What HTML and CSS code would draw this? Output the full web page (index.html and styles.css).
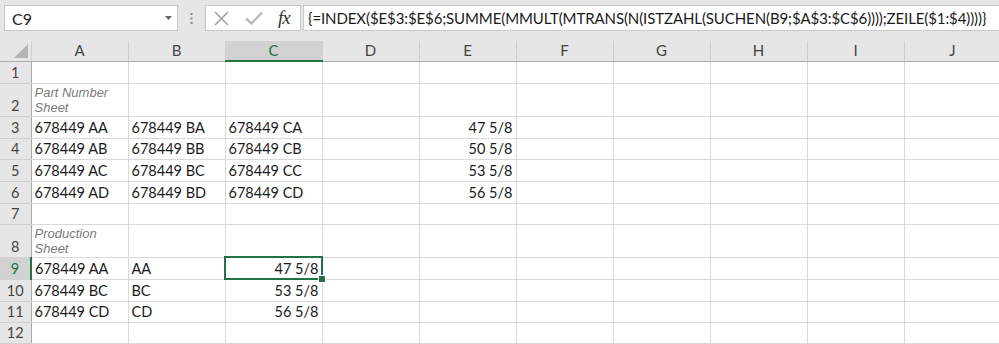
FILE: index.html
```html
<!DOCTYPE html>
<html lang="de">
<head>
    <meta charset="UTF-8">
    <title>Part Number Lookup</title>
    <link rel="stylesheet" href="styles.css">
</head>
<body>
    <div class="formula-bar">
        <div class="name-box">
            <span>C9</span>
            <svg class="dropdown" width="7" height="4" viewBox="0 0 7 4"><path d="M0 0h7L3.5 4z" fill="#666"/></svg>
        </div>
        <div class="grip">
            <svg width="3" height="11" viewBox="0 0 3 11"><rect x="0.5" y="0" width="2" height="2" fill="#888"/><rect x="0.5" y="4.5" width="2" height="2" fill="#888"/><rect x="0.5" y="9" width="2" height="2" fill="#888"/></svg>
        </div>
        <div class="fx-buttons">
            <svg class="btn-cancel" width="15" height="15" viewBox="0 0 15 15"><path d="M1 1l13 13M14 1L1 14" stroke="#a3a3a3" stroke-width="1.6" fill="none"/></svg>
            <svg class="btn-enter" width="18" height="14" viewBox="0 0 18 14"><path d="M1 7.5l5.5 5L17 1.5" stroke="#b9b9b9" stroke-width="2.4" fill="none"/></svg>
            <span class="fx">fx</span>
        </div>
        <div class="formula-input">{=INDEX($E$3:$E$6;SUMME(MMULT(MTRANS(N(ISTZAHL(SUCHEN(B9;$A$3:$C$6))));ZEILE($1:$4))))}</div>
    </div>

    <table class="sheet">
        <colgroup>
            <col class="col-rh">
            <col><col><col><col><col><col><col><col><col><col>
        </colgroup>
        <tr class="hdr">
            <th class="corner"><span class="tri"></span></th>
            <th>A</th><th>B</th><th class="sel">C</th><th>D</th><th>E</th><th>F</th><th>G</th><th>H</th><th>I</th><th>J</th>
        </tr>
        <tr class="h22">
            <th>1</th><td></td><td></td><td></td><td></td><td></td><td></td><td></td><td></td><td></td><td></td>
        </tr>
        <tr class="h33">
            <th>2</th><td class="note">Part Number Sheet</td><td></td><td></td><td></td><td></td><td></td><td></td><td></td><td></td><td></td>
        </tr>
        <tr class="h22">
            <th>3</th><td>678449 AA</td><td>678449 BA</td><td>678449 CA</td><td></td><td class="num">47 5/8</td><td></td><td></td><td></td><td></td><td></td>
        </tr>
        <tr class="h21">
            <th>4</th><td>678449 AB</td><td>678449 BB</td><td>678449 CB</td><td></td><td class="num">50 5/8</td><td></td><td></td><td></td><td></td><td></td>
        </tr>
        <tr class="h22">
            <th>5</th><td>678449 AC</td><td>678449 BC</td><td>678449 CC</td><td></td><td class="num">53 5/8</td><td></td><td></td><td></td><td></td><td></td>
        </tr>
        <tr class="h22">
            <th>6</th><td>678449 AD</td><td>678449 BD</td><td>678449 CD</td><td></td><td class="num">56 5/8</td><td></td><td></td><td></td><td></td><td></td>
        </tr>
        <tr class="h21">
            <th>7</th><td></td><td></td><td></td><td></td><td></td><td></td><td></td><td></td><td></td><td></td>
        </tr>
        <tr class="h33">
            <th>8</th><td class="note">Production Sheet</td><td></td><td></td><td></td><td></td><td></td><td></td><td></td><td></td><td></td>
        </tr>
        <tr class="h22">
            <th class="sel">9</th><td>678449 AA</td><td>AA</td><td class="num active">47 5/8</td><td></td><td></td><td></td><td></td><td></td><td></td><td></td>
        </tr>
        <tr class="h22">
            <th>10</th><td>678449 BC</td><td>BC</td><td class="num">53 5/8</td><td></td><td></td><td></td><td></td><td></td><td></td><td></td>
        </tr>
        <tr class="h21">
            <th>11</th><td>678449 CD</td><td>CD</td><td class="num">56 5/8</td><td></td><td></td><td></td><td></td><td></td><td></td><td></td>
        </tr>
        <tr class="h21">
            <th>12</th><td></td><td></td><td></td><td></td><td></td><td></td><td></td><td></td><td></td><td></td>
        </tr>
    </table>
</body>
</html>
```

FILE: styles.css
```css
* {
    box-sizing: border-box;
}

body {
    margin: 0;
    background: #fff;
    overflow: hidden;
    font-family: Lato, "Liberation Sans", sans-serif;
    color: #1a1a1a;
}

/* formula bar */

.formula-bar {
    height: 41px;
    background: #e6e6e6;
    display: flex;
    align-items: flex-start;
    padding-top: 5px;
    white-space: nowrap;
}

.name-box {
    margin-left: 4px;
    width: 174px;
    height: 26px;
    background: #fff;
    border: 1px solid #c8c8c8;
    display: flex;
    align-items: center;
    justify-content: space-between;
    padding: 0 5px 0 7px;
    font-size: 16px;
}

.grip {
    width: 27px;
    height: 26px;
    display: flex;
    align-items: center;
    justify-content: center;
}

.fx-buttons {
    width: 96px;
    height: 26px;
    background: #fff;
    border: 1px solid #c8c8c8;
    display: flex;
    align-items: center;
    padding-left: 8px;
}

.btn-enter {
    margin-left: 16px;
}

.fx {
    margin-left: 15px;
    font-family: "Liberation Serif", serif;
    font-style: italic;
    font-size: 19px;
    color: #333;
    letter-spacing: -1px;
}

.formula-input {
    margin-left: 2px;
    flex: 1;
    height: 26px;
    background: #fff;
    border: 1px solid #c8c8c8;
    border-right: none;
    padding-left: 4px;
    font-size: 15px;
    letter-spacing: -0.1px;
    line-height: 24px;
    overflow: hidden;
}

/* sheet grid */

.sheet {
    border-collapse: collapse;
    table-layout: fixed;
    width: 1000px;
}

.sheet col {
    width: 97px;
}

.sheet .col-rh {
    width: 31px;
}

.sheet th,
.sheet td {
    padding: 0 3px 1px;
    vertical-align: bottom;
    white-space: nowrap;
    font-size: 14.5px;
    line-height: 18px;
    font-weight: normal;
}

.sheet td {
    border: 1px solid #d9d9d9;
    border-top: none;
    border-left: none;
}

.sheet th {
    background: #e6e6e6;
    color: #444;
    text-align: center;
    border-right: 1px solid #c6c6c6;
    border-bottom: 1px solid #d0d0d0;
}

.hdr {
    height: 20px;
}

.hdr th {
    vertical-align: middle;
    font-size: 15px;
    border-bottom: 1px solid #ababab;
    border-right: 1px solid #cfcfcf;
}

.sheet tr:not(.hdr) th {
    border-right: 1px solid #ababab;
    padding: 0 0 1px;
}

.corner {
    position: relative;
}

.tri {
    position: absolute;
    right: 3px;
    bottom: 3px;
    width: 0;
    height: 0;
    border-left: 14px solid transparent;
    border-bottom: 14px solid #b4b4b4;
}

.h21 { height: 21px; }
.h22 { height: 22px; }
.h33 { height: 33px; }

.num {
    text-align: right;
}

.note {
    white-space: normal !important;
    font-family: "Liberation Sans", Arial, sans-serif;
    font-style: italic;
    font-size: 13px !important;
    line-height: 15px !important;
    color: #7a7a7a;
}

/* selection */

.sheet th.sel {
    background: #d2d2d2;
    color: #217346;
}

.hdr th.sel {
    border-bottom: 2px solid #217346;
}

.sheet tr:not(.hdr) th.sel {
    border-right: 2px solid #217346;
}

.active {
    position: relative;
}

.active::before {
    content: "";
    position: absolute;
    left: -2px;
    top: -2px;
    right: -1px;
    bottom: -1px;
    border: 2px solid #217346;
}

.active::after {
    content: "";
    position: absolute;
    right: -4px;
    bottom: -4px;
    width: 6px;
    height: 6px;
    background: #217346;
    border: 1px solid #fff;
}
```
